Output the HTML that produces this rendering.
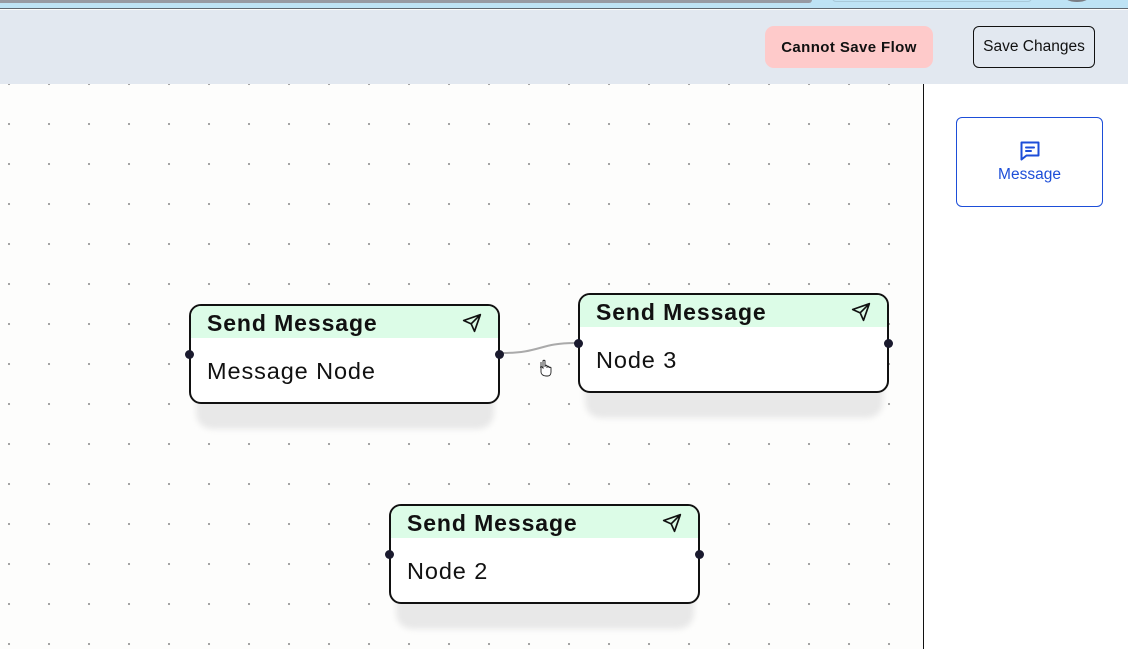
<!DOCTYPE html>
<html><head><meta charset="utf-8"><style>
*{box-sizing:border-box;margin:0;padding:0}
body{width:1128px;height:649px;overflow:hidden;position:relative;background:#fdfdfc;font-family:"Liberation Sans",Arial,sans-serif}
.top{position:absolute;left:0;top:0;width:1128px;height:9px;background:#bee3f5;border-bottom:1px solid #5f6770}
.bar{position:absolute;left:0;top:0;width:812px;height:3px;background:#979aa3;border-radius:0 0 6px 0}
.pill{position:absolute;left:832px;top:-6px;width:200px;height:8px;border:1px solid #a9c9d9;border-radius:6px}
.circ{position:absolute;left:1065px;top:-8px;width:24px;height:10px;border-radius:50%;background:#7a7d84}
.hdr{position:absolute;left:0;top:10px;width:1128px;height:74px;background:#e2e8f0}
.btn1{position:absolute;left:765px;top:26px;width:168px;height:42px;background:#fecaca;border-radius:9px;font-weight:bold;font-size:15px;letter-spacing:0.4px;display:flex;align-items:center;justify-content:center;color:#111}
.btn2{position:absolute;left:973px;top:26px;width:122px;height:42px;border:1px solid #111;border-radius:6px;font-size:15.5px;display:flex;align-items:center;justify-content:center;color:#111}
.canvas{position:absolute;left:0;top:84px;width:923px;height:565px;background-color:#fdfdfc;background-image:radial-gradient(circle at 1px 1px,#9a9a9a 0.9px,transparent 1.3px);background-size:40px 40px;background-position:8px -1px}
.side{position:absolute;left:923px;top:84px;width:205px;height:565px;background:#fff;border-left:1px solid #111}
.card{position:absolute;left:956px;top:117px;width:147px;height:90px;border:1px solid #1d4ed8;border-radius:6px;color:#1d4ed8;font-size:15.5px;text-align:center}
.shadow{position:absolute;background:#e8e8e8;border-radius:16px;filter:blur(3px)}
.node{position:absolute;width:311px;height:100px;border:2px solid #111;border-radius:12px;background:#fff;overflow:visible}
.nh{height:32px;background:#dcfce7;border-radius:10px 10px 0 0;font-weight:bold;font-size:23px;letter-spacing:0.9px;padding-left:16px;line-height:34px;color:#111;position:relative}
.nh svg{position:absolute;right:16px;top:7px}
.nb{font-size:23.5px;letter-spacing:0.9px;padding-left:16px;line-height:32px;margin-top:17px;color:#111}
.h{position:absolute;width:9px;height:9px;border-radius:50%;background:#1a1a2e;top:44px}
.h.l{left:-6px}.h.r{right:-6px}
</style></head><body>
<div class="top"><div class="bar"></div><div class="pill"></div><div class="circ"></div></div>
<div class="hdr"></div>
<div class="btn1">Cannot Save Flow</div>
<div class="btn2">Save Changes</div>
<div class="canvas"></div>
<div class="side"></div>
<div class="card">
<svg style="position:absolute;left:61px;top:21px" width="24" height="24" viewBox="0 0 24 24" fill="none" stroke="#1d4ed8" stroke-width="2" stroke-linejoin="round" stroke-linecap="round"><path d="M3.5 3.5h17v13H8.5l-5 4z"/><path d="M8 8.5h8M8 12h5"/></svg>
<div style="position:absolute;left:0;right:0;top:48px">Message</div>
</div>
<div class="shadow" style="left:196px;top:385px;width:298px;height:44px"></div>
<div class="shadow" style="left:585px;top:374px;width:298px;height:44px"></div>
<div class="shadow" style="left:396px;top:585px;width:298px;height:44px"></div>
<svg style="position:absolute;left:0;top:0" width="923" height="649"><path d="M503 353 C540 353,540 343,575 343" stroke="#aaa" stroke-width="2" fill="none"/>
<path d="M541 362v10c0 2 2 4 5 4h2c2 0 3-2 3-4v-4c0-1-2-1-2 0m0 0v-1c0-1-2-1-2 0m0 1v-2c0-1-2-1-2 0v1m0 0v-6c0-1-2-1-2 0v7l-1-1c-1-1-2 0-1 1" stroke="#222" stroke-width="0.9" fill="#fff"/></svg>
<div class="node" style="left:189px;top:304px"><div class="nh">Send Message<svg width="20" height="20" viewBox="0 0 24 24" fill="none" stroke="#111" stroke-width="2" stroke-linejoin="round"><path d="M22 2L11 13M22 2l-7 20-4-9-9-4z"/></svg></div><div class="nb">Message Node</div><div class="h l"></div><div class="h r"></div></div>
<div class="node" style="left:578px;top:293px"><div class="nh">Send Message<svg width="20" height="20" viewBox="0 0 24 24" fill="none" stroke="#111" stroke-width="2" stroke-linejoin="round"><path d="M22 2L11 13M22 2l-7 20-4-9-9-4z"/></svg></div><div class="nb">Node 3</div><div class="h l"></div><div class="h r"></div></div>
<div class="node" style="left:389px;top:504px"><div class="nh">Send Message<svg width="20" height="20" viewBox="0 0 24 24" fill="none" stroke="#111" stroke-width="2" stroke-linejoin="round"><path d="M22 2L11 13M22 2l-7 20-4-9-9-4z"/></svg></div><div class="nb">Node 2</div><div class="h l"></div><div class="h r"></div></div>
</body></html>
